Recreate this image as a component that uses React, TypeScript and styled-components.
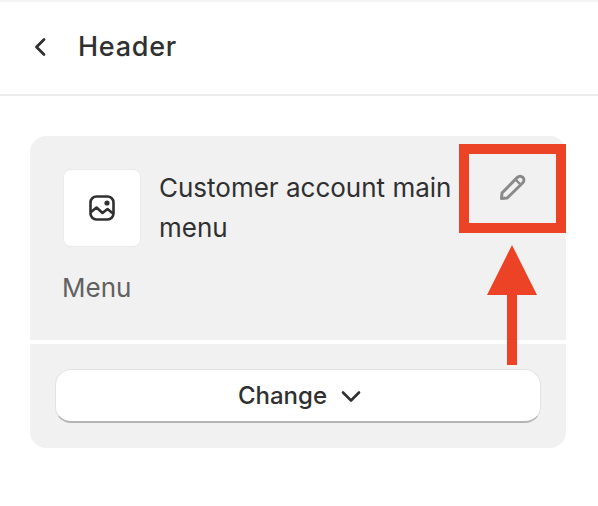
import { createGlobalStyle, styled } from 'styled-components';

const GlobalStyle = createGlobalStyle`
  html, body {
    margin: 0;
    background: #fff;
  }
  body {
    font-family: Inter, "Liberation Sans", sans-serif;
    color: #303030;
  }
`;

const BackIcon = () => (
  <svg width="28" height="28" viewBox="0 0 28 28" fill="none">
    <path
      d="M18 6.5 L10.5 14 L18 21.5"
      stroke="#303030"
      strokeWidth="2.8"
      strokeLinecap="round"
      strokeLinejoin="round"
    />
  </svg>
);

const ImageIcon = () => (
  <svg width="26" height="26" viewBox="0 0 26 26" fill="none">
    <rect x="1.5" y="1.5" width="23" height="23" rx="6" stroke="#303030" strokeWidth="2.6" />
    <circle cx="18" cy="8" r="2.6" fill="#303030" />
    <path
      d="M2 17 L7.5 12.5 L13.5 18 L18.5 14 L24 18.5"
      stroke="#303030"
      strokeWidth="2.6"
      strokeLinejoin="round"
    />
  </svg>
);

const PencilIcon = () => (
  <svg width="28" height="28" viewBox="0 0 28 28" fill="none">
    <path
      d="M2.5 25.5 L3 20 L18.4 4.4 a3.8 3.8 0 0 1 5.4 5.4 L8.2 25 Z"
      stroke="#8a8a8a"
      strokeWidth="3"
      strokeLinejoin="round"
    />
    <path d="M17 7 L21 11" stroke="#8a8a8a" strokeWidth="2.4" />
  </svg>
);

const ChevronIcon = () => (
  <svg width="22" height="14" viewBox="0 0 22 14" fill="none">
    <path
      d="M3 3.5 L11 11.5 L19 3.5"
      stroke="#303030"
      strokeWidth="2.6"
      strokeLinecap="round"
      strokeLinejoin="round"
    />
  </svg>
);

const App = () => {
  return (
    <Page>
      <GlobalStyle />
      <Header>
        <BackIcon />
        <Title>Header</Title>
      </Header>
      <Content>
        <Card>
          <CardTop>
            <Row>
              <Thumb>
                <ImageIcon />
              </Thumb>
              <ItemName>Customer account main menu</ItemName>
              <EditButton>
                <PencilIcon />
              </EditButton>
            </Row>
            <Label>Menu</Label>
          </CardTop>
          <CardBottom>
            <ChangeButton>
              Change
              <ChevronIcon />
            </ChangeButton>
          </CardBottom>
          <Highlight />
          <ArrowHead />
          <ArrowShaft />
        </Card>
      </Content>
    </Page>
  );
};

const Page = styled.div`
  width: 598px;
  height: 506px;
  overflow: hidden;
  box-sizing: border-box;
  border-top: 2px solid #f3f3f3;
`;

const Header = styled.header`
  display: flex;
  align-items: center;
  gap: 24px;
  height: 94px;
  padding: 0 0 3px 26px;
  box-sizing: border-box;
  border-bottom: 2px solid #ebebeb;
`;

const Title = styled.h1`
  margin: 0;
  font-size: 27px;
  font-weight: 550;
  letter-spacing: 0.75px;
  color: #303030;
`;

const Content = styled.main`
  padding: 40px 32px 0 30px;
`;

const Card = styled.section`
  position: relative;
  display: flex;
  flex-direction: column;
  gap: 4px;
`;

const CardTop = styled.div`
  height: 204px;
  box-sizing: border-box;
  padding: 33px 0 0 33px;
  background: #f1f1f1;
  border-radius: 16px 16px 0 0;
`;

const Row = styled.div`
  display: flex;
  align-items: flex-start;
`;

const Thumb = styled.div`
  display: flex;
  align-items: center;
  justify-content: center;
  flex: none;
  width: 78px;
  height: 78px;
  box-sizing: border-box;
  background: #fff;
  border: 1px solid #ebebeb;
  border-radius: 8px;
`;

const ItemName = styled.div`
  width: 310px;
  margin: -1px 0 0 18px;
  font-size: 26px;
  line-height: 40px;
  color: #303030;
`;

const EditButton = styled.div`
  display: flex;
  margin: 4px 0 0 30px;
`;

const Label = styled.div`
  margin: 20px 0 0 -1px;
  font-size: 26px;
  line-height: 40px;
  color: #616161;
`;

const CardBottom = styled.div`
  height: 104px;
  box-sizing: border-box;
  padding: 25px;
  background: #f1f1f1;
  border-radius: 0 0 16px 16px;
`;

const ChangeButton = styled.div`
  display: flex;
  align-items: center;
  justify-content: center;
  gap: 13px;
  width: 486px;
  height: 54px;
  padding-left: 4px;
  box-sizing: border-box;
  background: #fff;
  border-radius: 16px;
  border: 1px solid #e3e3e3;
  border-bottom: 2px solid #b5b5b5;
  font-size: 24px;
  font-weight: 550;
  color: #303030;
`;

const Highlight = styled.div`
  position: absolute;
  top: 8px;
  left: 429px;
  width: 107px;
  height: 89px;
  box-sizing: border-box;
  border: 10px solid #ec4226;
`;

const ArrowHead = styled.div`
  position: absolute;
  top: 109px;
  left: 457px;
  width: 0;
  height: 0;
  border-left: 25px solid transparent;
  border-right: 25px solid transparent;
  border-bottom: 50px solid #ec4226;
`;

const ArrowShaft = styled.div`
  position: absolute;
  top: 159px;
  left: 477px;
  width: 10px;
  height: 70px;
  background: #ec4226;
`;

export default App;
